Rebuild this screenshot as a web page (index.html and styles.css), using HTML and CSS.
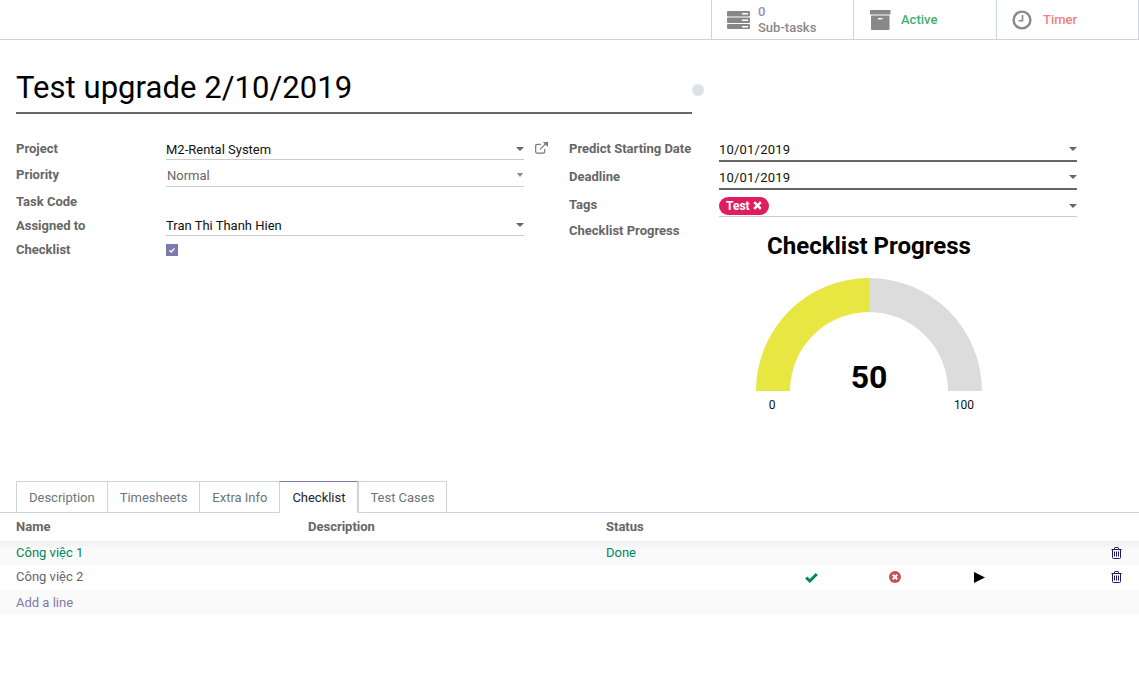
FILE: index.html
```html
<!DOCTYPE html>
<html lang="en">
<head>
    <meta charset="UTF-8">
    <title>Test upgrade 2/10/2019</title>
    <link rel="stylesheet" href="styles.css">
</head>
<body>

    <div class="button-box">
        <div class="stat-button">
            <svg class="stat-icon icon-tasks" width="24" height="18" viewBox="0 0 24 18">
                <path fill="#888" d="M1 0h21a1 1 0 0 1 1 1v3.500a1 1 0 0 1-1 1H1a1 1 0 0 1-1-1V1a1 1 0 0 1 1-1zm0 6.500h21a1 1 0 0 1 1 1v3.500a1 1 0 0 1-1 1H1a1 1 0 0 1-1-1V7.500a1 1 0 0 1 1-1zm0 6.500h21a1 1 0 0 1 1 1v3a1 1 0 0 1-1 1H1a1 1 0 0 1-1-1v-3a1 1 0 0 1 1-1z"/>
                <path fill="#fff" d="M15 2h6v1.500h-6zM15 8.500h6V10h-6zM15 15h6v1.500h-6z"/>
            </svg>
            <div class="stat-text">
                <span class="stat-value">0</span>
                <span>Sub-tasks</span>
            </div>
        </div>
        <div class="stat-button">
            <svg class="stat-icon" width="21" height="20" viewBox="0 0 21 20">
                <path fill="#888" d="M0 0h20.500v4.500H0zM1 5.500h18.500V19a1 1 0 0 1-1 1H2a1 1 0 0 1-1-1z"/>
                <path fill="#fff" d="M8 8h4.500v1.400H8z"/>
            </svg>
            <span class="stat-active">Active</span>
        </div>
        <div class="stat-button">
            <svg class="stat-icon icon-timer" width="20" height="20" viewBox="0 0 20 20">
                <circle cx="10" cy="10" r="8.400" fill="none" stroke="#888" stroke-width="2.400"/>
                <path fill="none" stroke="#888" stroke-width="1.600" d="M10.500 5v5.800H6.500"/>
            </svg>
            <span class="stat-timer">Timer</span>
        </div>
    </div>

    <div class="sheet">
        <div class="title-row">
            <h1 class="task-name">Test upgrade 2/10/2019</h1>
            <span class="status-dot"></span>
        </div>

        <div class="form-columns">
            <div class="form-left">
                <div class="field field-project">
                    <label>Project</label>
                    <div class="input">M2-Rental System<span class="caret"></span></div>
                    <svg class="ext-link" width="13" height="12" viewBox="0 0 14 13">
                        <path fill="none" stroke="#777" stroke-width="1.300" d="M10.500 7.500v3a1.500 1.500 0 0 1-1.500 1.500H2.200a1.500 1.500 0 0 1-1.500-1.500V4a1.500 1.500 0 0 1 1.500-1.500h4M5.500 8l7-7"/>
                        <path fill="#777" d="M8.500 0H14v5.500z"/>
                    </svg>
                </div>
                <div class="field field-priority">
                    <label>Priority</label>
                    <div class="input input-muted">Normal<span class="caret caret-small"></span></div>
                </div>
                <div class="field field-code">
                    <label>Task Code</label>
                </div>
                <div class="field field-assigned">
                    <label>Assigned to</label>
                    <div class="input">Tran Thi Thanh Hien<span class="caret"></span></div>
                </div>
                <div class="field field-check">
                    <label>Checklist</label>
                    <span class="checkbox">
                        <svg width="12" height="12" viewBox="0 0 12 12"><path fill="none" stroke="#fff" stroke-width="1.300" d="M3.500 6.200l1.800 1.800 3.200-3.600"/></svg>
                    </span>
                </div>
            </div>

            <div class="form-right">
                <div class="field field-date">
                    <label>Predict Starting Date</label>
                    <div class="input input-required">10/01/2019<span class="caret"></span></div>
                </div>
                <div class="field field-date">
                    <label>Deadline</label>
                    <div class="input input-required">10/01/2019<span class="caret"></span></div>
                </div>
                <div class="field field-tags">
                    <label>Tags</label>
                    <div class="input"><span class="tag">Test <svg width="9" height="9" viewBox="0 0 9 9"><path stroke="#fff" stroke-width="2.400" d="M1.200 1.200l6.600 6.600M7.800 1.200l-6.600 6.600"/></svg></span><span class="caret"></span></div>
                </div>
                <div class="field field-gauge">
                    <label>Checklist Progress</label>
                    <div class="gauge">
                        <div class="gauge-title">Checklist Progress</div>
                        <svg width="300" height="166" viewBox="0 0 300 166">
                            <path fill="#dcdcdc" d="M150 3a113 113 0 0 1 113 113h-34a79 79 0 0 0-79-79z"/>
                            <path fill="#e8e641" d="M150 3a113 113 0 0 0-113 113h34a79 79 0 0 1 79-79z"/>
                            <text class="gauge-value" x="150" y="113" text-anchor="middle">50</text>
                            <text class="gauge-limit" x="53" y="134" text-anchor="middle">0</text>
                            <text class="gauge-limit" x="245" y="134" text-anchor="middle">100</text>
                        </svg>
                    </div>
                </div>
            </div>
        </div>
    </div>

    <div class="tabs">
        <a class="tab">Description</a>
        <a class="tab">Timesheets</a>
        <a class="tab">Extra Info</a>
        <a class="tab tab-active">Checklist</a>
        <a class="tab tab-last">Test Cases</a>
    </div>

    <table class="lines">
        <colgroup>
            <col class="col-name">
            <col class="col-desc">
            <col class="col-status">
            <col class="col-action">
            <col class="col-action">
            <col class="col-action">
            <col>
            <col class="col-trash">
        </colgroup>
        <thead>
            <tr>
                <th>Name</th>
                <th>Description</th>
                <th>Status</th>
                <th></th><th></th><th></th><th></th><th></th>
            </tr>
        </thead>
        <tbody>
            <tr class="row-done">
                <td>Công việc 1</td>
                <td></td>
                <td>Done</td>
                <td></td><td></td><td></td><td></td>
                <td class="cell-icon">
                    <svg class="trash" width="11" height="12" viewBox="0 0 11 12"><use href="#trash"/></svg>
                </td>
            </tr>
            <tr class="row-open">
                <td>Công việc 2</td>
                <td></td>
                <td></td>
                <td class="cell-icon">
                    <svg width="13" height="11" viewBox="0 0 13 11"><path fill="none" stroke="#00875a" stroke-width="3" d="M1.200 5.500l3.600 3.500 7-7"/></svg>
                </td>
                <td class="cell-icon">
                    <svg width="12" height="12" viewBox="0 0 12 12"><circle cx="6" cy="6" r="6" fill="#c9505a"/><path stroke="#fff" stroke-width="2" d="M3.800 3.800l4.400 4.400M8.200 3.800l-4.400 4.400"/></svg>
                </td>
                <td class="cell-icon">
                    <svg width="11" height="11" viewBox="0 0 11 11"><path fill="#000" d="M0 0l11 5.500L0 11z"/></svg>
                </td>
                <td></td>
                <td class="cell-icon">
                    <svg class="trash" width="11" height="12" viewBox="0 0 11 12"><use href="#trash"/></svg>
                </td>
            </tr>
            <tr class="row-add">
                <td colspan="8"><a>Add a line</a></td>
            </tr>
        </tbody>
    </table>

    <svg width="0" height="0" class="defs">
        <symbol id="trash" viewBox="0 0 11 12">
            <path fill="none" stroke="#1a1a5c" stroke-width="1" d="M.5 2.500h10M3.500 2.500V1.200q0-.7.7-.7h2.600q.7 0 .7.7v1.300M1.500 2.500v8q0 1 1 1h6q1 0 1-1v-8M3.500 4.500v5M5.500 4.500v5M7.500 4.500v5"/>
        </symbol>
    </svg>

</body>
</html>
```

FILE: styles.css
```css
* {
    box-sizing: border-box;
}
body {
    margin: 0;
    font-family: Roboto, "Liberation Sans", sans-serif;
    font-size: 13px;
    line-height: 1.23;
    color: #212529;
    background: #fff;
}
.defs {
    display: block;
}

/* top buttons */
.button-box {
    display: flex;
    justify-content: flex-end;
    height: 40px;
    border-bottom: 1px solid #ced4da;
}
.stat-button {
    display: flex;
    align-items: center;
    width: 143px;
    padding-left: 15px;
    border-left: 1px solid #ced4da;
    font-weight: 500;
    color: #888;
}
.stat-button:first-child {
    width: 142px;
}
.stat-button:last-child {
    border-right: 1px solid #ced4da;
}
.stat-icon {
    flex: none;
    margin-right: 10px;
}
.icon-tasks {
    margin-right: 7px;
}
.icon-timer {
    margin-right: 11px;
}
.stat-button:nth-child(2) .stat-icon {
    margin-left: 1px;
}
.stat-text {
    display: flex;
    flex-direction: column;
    padding-top: 1px;
    line-height: 16px;
}
.stat-value {
    color: #8f8cc0;
}
.stat-active {
    color: #3cb371;
}
.stat-timer {
    color: #ee8080;
}

/* form */
.sheet {
    height: 441px;
    padding: 26px 16px 0;
}
.title-row {
    display: flex;
    align-items: flex-end;
}
.task-name {
    width: 676px;
    height: 48px;
    margin: 0;
    padding-top: 1px;
    border-bottom: 2px solid #666;
    font-size: 31px;
    font-weight: 400;
    line-height: 41px;
    letter-spacing: .05px;
    color: #000;
}
.status-dot {
    width: 12px;
    height: 12px;
    margin: 0 0 18px 0;
    border-radius: 50%;
    background: #dee2e6;
}
.form-columns {
    display: flex;
    padding-top: 25px;
}
.form-left {
    width: 553px;
}
.form-right {
    flex: 1;
}
.field {
    display: flex;
    position: relative;
}
.field label {
    flex: none;
    width: 150px;
    font-weight: 700;
    color: #666;
    line-height: 16px;
}
.input {
    position: relative;
    width: 358px;
    border-bottom: 1px solid #ccc;
    color: #111;
    line-height: 16px;
}
.input-muted {
    color: #666;
    padding-left: 1px;
}
.input-required {
    border-bottom: 2px solid #666;
}
.caret {
    position: absolute;
    right: 0;
    top: 7px;
    width: 0;
    height: 0;
    border-left: 4.500px solid transparent;
    border-right: 4.500px solid transparent;
    border-top: 4px solid #666;
}
.caret-small {
    right: 1px;
    border-left-width: 3.500px;
    border-right-width: 3.500px;
    border-top-color: #888;
}
.field-project {
    height: 25px;
    padding-top: 2px;
}
.field-project .input {
    height: 19px;
    padding-top: 1px;
}
.field-project .caret,
.field-date .caret {
    top: 6px;
}
.ext-link {
    position: absolute;
    left: 519px;
    top: 3px;
}
.field-priority {
    height: 28px;
    padding-top: 2px;
}
.field-priority label {
    margin-top: 1px;
}
.field-priority .input {
    height: 21px;
    padding-top: 2px;
}
.field-code {
    height: 24px;
    padding-top: 2px;
}
.field-assigned {
    height: 24px;
}
.field-assigned label {
    margin-top: 2px;
}
.field-assigned .input {
    height: 20px;
    padding-top: 2px;
}
.field-check {
    padding-top: 2px;
}
.field-check .checkbox {
    display: block;
    width: 12px;
    height: 12px;
    margin-top: 2px;
    background: #7c7bad;
}
.field-date {
    height: 28px;
}
.field-date:first-child {
    margin-top: 2px;
}
.field-date .input {
    height: 21px;
    padding-top: 1px;
    letter-spacing: .2px;
}
.field-tags {
    height: 26px;
}
.field-tags .input {
    height: 20px;
}
.tag {
    display: inline-block;
    height: 18px;
    padding: 0 7px;
    border-radius: 9px;
    background: #e01e5f;
    color: #fff;
    font-weight: 700;
    font-size: 12px;
    line-height: 18px;
}
.field-gauge {
    height: 200px;
}
.gauge {
    width: 300px;
    padding-top: 8px;
}
.gauge-title {
    font-size: 24px;
    font-weight: 700;
    line-height: 30px;
    color: #000;
    text-align: center;
}
.gauge svg {
    display: block;
    margin-top: 14px;
}
.gauge-value {
    font-size: 32px;
    font-weight: 700;
    fill: #000;
}
.gauge-limit {
    font-size: 12px;
    fill: #111;
}

/* tabs */
.tabs {
    display: flex;
    height: 32px;
    padding-left: 16px;
    border-bottom: 1px solid #ced4da;
}
.tab {
    height: 32px;
    padding: 8px 12px 0;
    border: 1px solid #ced4da;
    margin-right: -1px;
    color: #6c757d;
    line-height: 16px;
    letter-spacing: -.015px;
}
.tab-active {
    position: relative;
    z-index: 1;
    margin-right: 0;
    border-top: 1px solid #7c7bad;
    border-bottom-color: #fff;
    color: #212529;
}
.tab-last {
    padding-left: 11px;
}

/* lines */
.lines {
    width: 100%;
    border-collapse: collapse;
    table-layout: fixed;
}
.col-name {
    width: 308px;
}
.col-desc {
    width: 298px;
}
.col-status {
    width: 163px;
}
.col-action {
    width: 84px;
}
.col-trash {
    width: 46px;
}
.lines th {
    height: 28px;
    padding: 0;
    text-align: left;
    font-weight: 700;
    color: #666;
}
.lines th:first-child,
.lines td:first-child {
    padding-left: 16px;
}
.lines td {
    height: 25px;
    padding: 0;
    color: #666;
}
.row-done td {
    height: 24px;
    padding-bottom: 1px;
    color: #00875a;
}
.row-open td {
    padding-bottom: 1px;
}
.row-done {
    background: linear-gradient(#efefef, #fafafa 8px);
}
.row-add {
    background: #fafafa;
}
.row-add td {
    padding-top: 1px;
}
.row-add a {
    color: #7c7bad;
}
.cell-icon {
    text-align: center;
    line-height: 0;
}
.cell-icon svg {
    vertical-align: middle;
}
```
